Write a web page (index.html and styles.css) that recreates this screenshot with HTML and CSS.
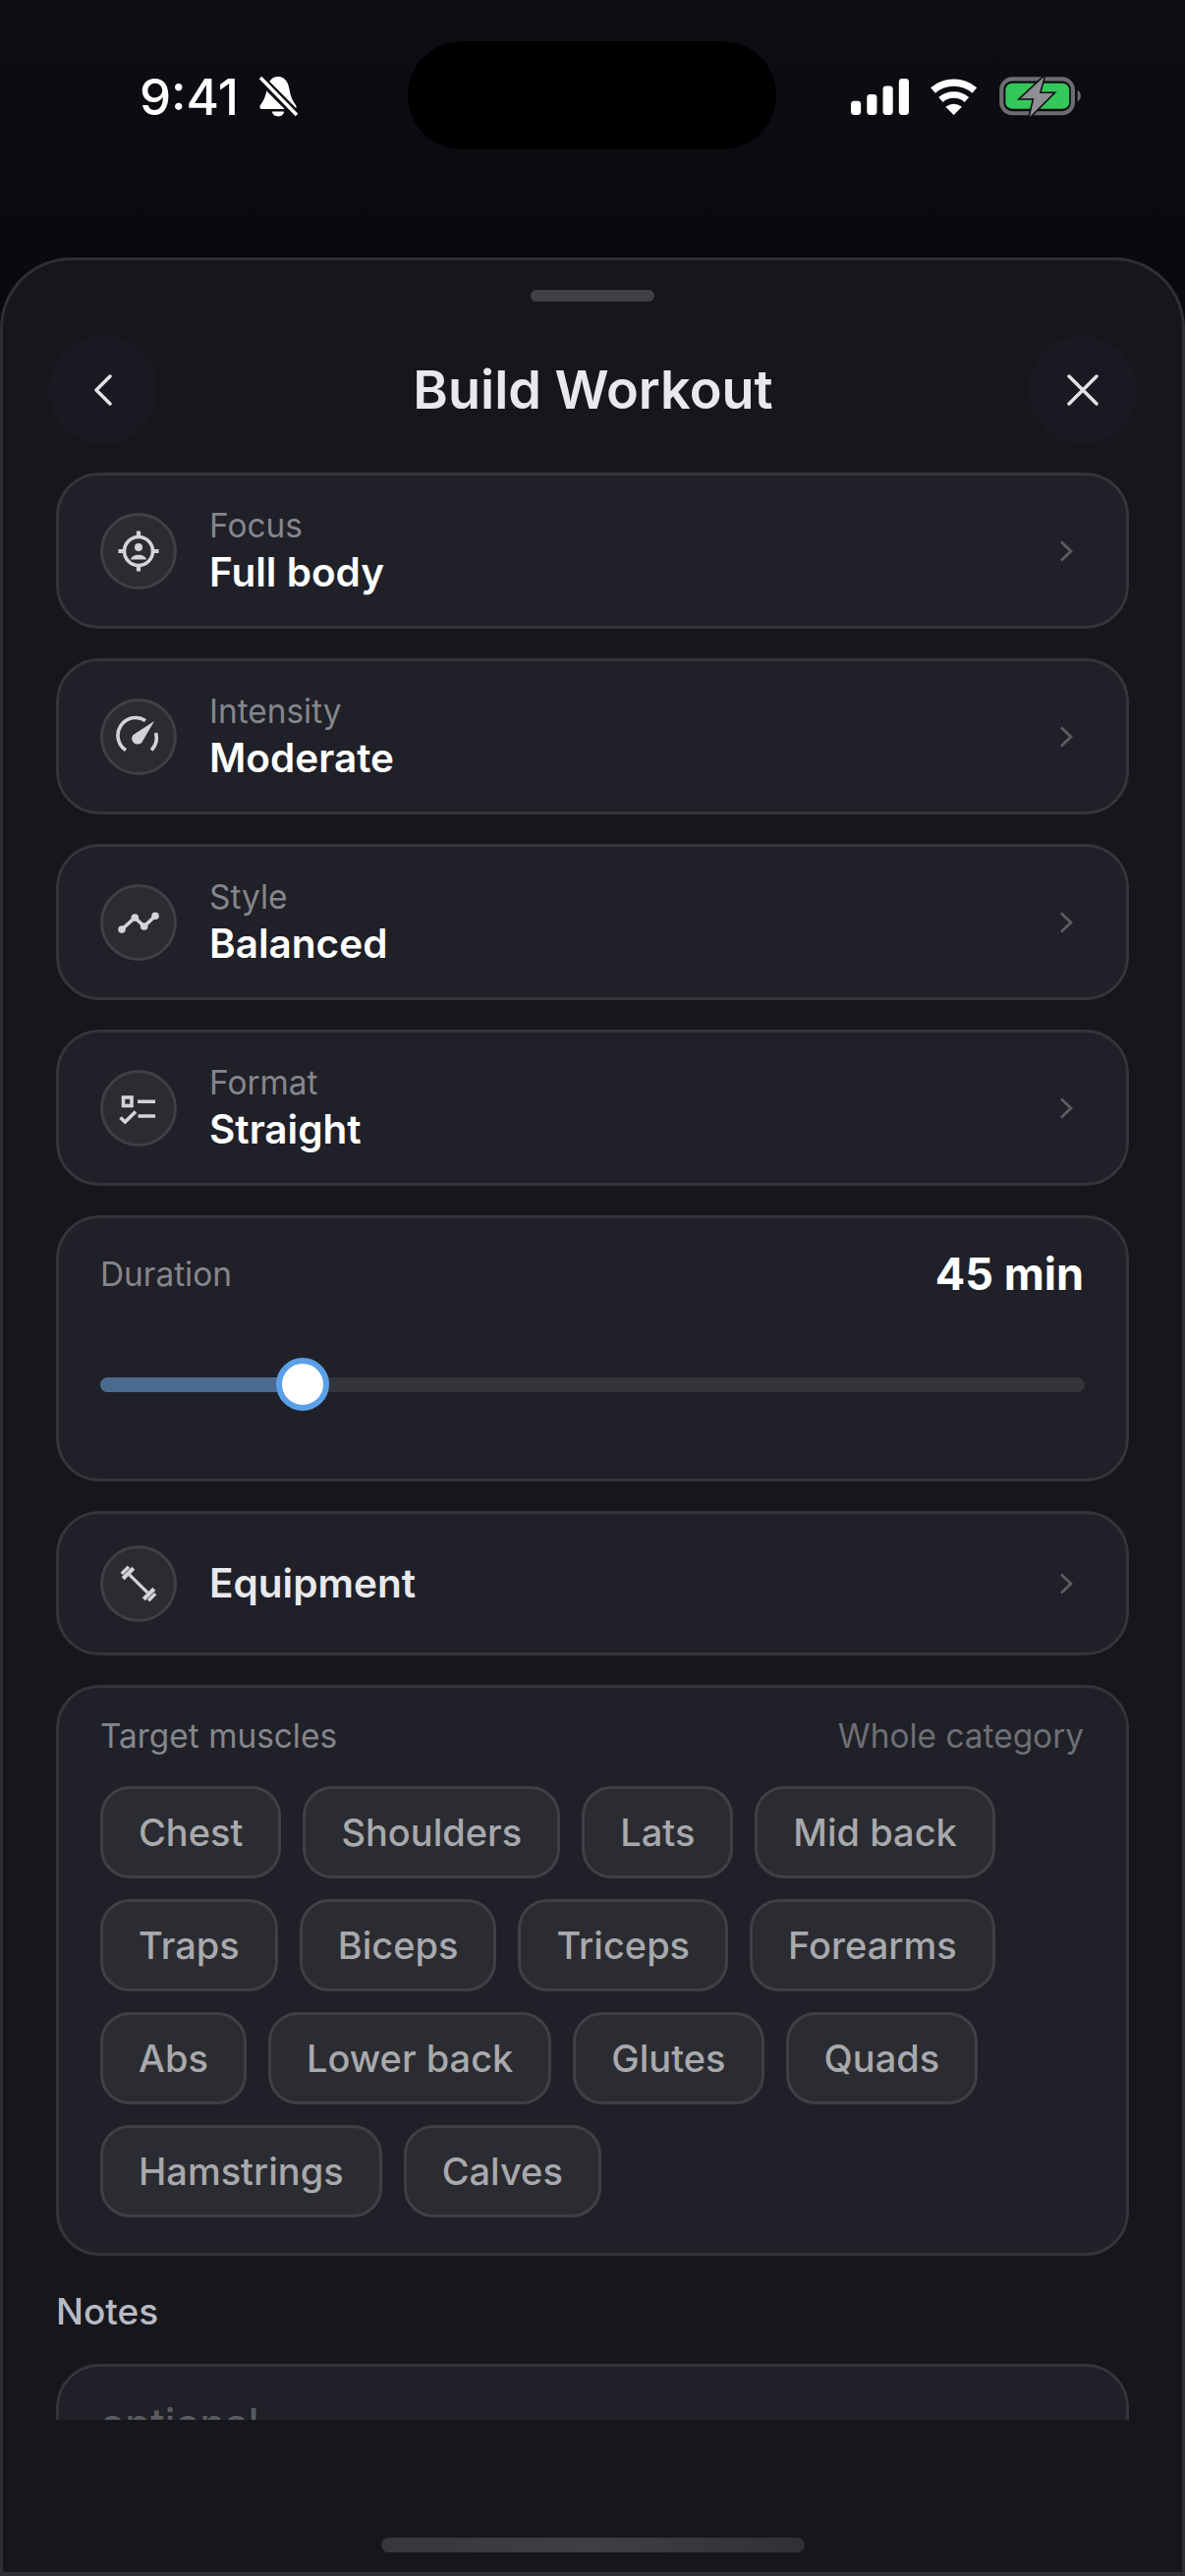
FILE: index.html
```html
<!DOCTYPE html>
<html lang="en">
<head>
<meta charset="utf-8">
<title>Build Workout</title>
<link rel="stylesheet" href="styles.css">
</head>
<body>
<div class="screen">
  <header class="status">
    <div class="status-left">
      <span class="time">9:41</span>
      <svg class="bell" viewBox="0 0 40 43"><path d="M20 1C13 1 9.500 7 8.500 14C7.500 21 5 26 2 30C0.500 32.500 2 34 4 34H36C38 34 39.500 32.500 38 30C35 26 32.500 21 31.500 14C30.500 7 27 1 20 1Z" fill="#fff"/><path d="M14 36.500H26C25.500 43 14.500 43 14 36.500Z" fill="#fff"/><path d="M1 2L39 40" stroke="#0a0b10" stroke-width="9"/><path d="M2 2L39 40" stroke="#fff" stroke-width="3.500"/></svg>
    </div>
    <div class="island"></div>
    <div class="status-right">
      <svg class="signal" viewBox="75 88 174 109"><rect x="75" y="155" width="30" height="42" rx="10" fill="#fff"/><rect x="123" y="135" width="30" height="62" rx="10" fill="#fff"/><rect x="171" y="110" width="30" height="87" rx="10" fill="#fff"/><rect x="219" y="88" width="30" height="109" rx="10" fill="#fff"/></svg>
      <svg class="wifi" viewBox="318 85 150 115"><path d="M328 121A98 98 0 0 1 456 121" fill="none" stroke="#fff" stroke-width="22"/><path d="M352 150A60 60 0 0 1 432 150" fill="none" stroke="#fff" stroke-width="20"/><path d="M392 197L367 172Q392 154 417 172Z" fill="#fff"/></svg>
      <svg class="battery" viewBox="535 82 245 126"><rect x="541" y="92" width="213" height="102" rx="32" fill="none" stroke="#6c6d71" stroke-width="12"/><rect x="553" y="105" width="190" height="76" rx="20" fill="#34c759"/><path d="M768 125C778 130 782 150 768 160Z" fill="#6c6d71"/><path d="M668 85L598 150H638L625 205L695 135H654Z" fill="#8e8f93" stroke="#0a0b10" stroke-width="9" paint-order="stroke"/></svg>
    </div>
  </header>

  <main class="sheet">
    <div class="handle"></div>
    <div class="sheet-head">
      <button class="round-btn" type="button"><svg class="head-icon" viewBox="0 0 32 32"><path d="M23 2L9 16L23 30" /></svg></button>
      <h1 class="title">Build Workout</h1>
      <button class="round-btn" type="button"><svg class="head-icon" viewBox="0 0 32 32"><path d="M2 2L30 30M30 2L2 30" /></svg></button>
    </div>

    <div class="scroll">
      <section class="card row">
        <span class="icon-wrap"><svg class="row-icon" viewBox="-20 -20 40 40"><circle r="14.500" class="ln"/><path class="ln tick" d="M0 -20.500V-14M0 14V20.500M-20.500 0H-14M14 0H20.500"/><circle cy="-4" r="4" class="fl"/><path class="fl" d="M-8 8.500C-7 2 7 2 8 8.500Z"/></svg></span>
        <div class="row-text"><div class="label">Focus</div><div class="value">Full body</div></div>
        <svg class="chev" viewBox="0 0 14 22"><path d="M2 1.500L12 11L2 20.500"/></svg>
      </section>
      <section class="card row">
        <span class="icon-wrap"><svg class="row-icon" viewBox="-20 -20 40 40"><path class="ln" d="M-13 13.500A18 18 0 0 1 7 -16.500"/><path class="ln" d="M17.500 -4A18 18 0 0 1 13 13.500"/><path class="fl" d="M16 -16L3.500 5.500A5.500 5.500 0 1 1 -5.500 -2Z"/></svg></span>
        <div class="row-text"><div class="label">Intensity</div><div class="value">Moderate</div></div>
        <svg class="chev" viewBox="0 0 14 22"><path d="M2 1.500L12 11L2 20.500"/></svg>
      </section>
      <section class="card row">
        <span class="icon-wrap"><svg class="row-icon" viewBox="-20 -20 40 40"><path class="ln" d="M-17 7L-3.700 -5L5.700 4L17 -6.700"/><circle cx="-17" cy="7" r="3.800" class="fl"/><circle cx="-3.700" cy="-5" r="3.800" class="fl"/><circle cx="5.700" cy="4" r="3.800" class="fl"/><circle cx="17" cy="-6.700" r="3.800" class="fl"/></svg></span>
        <div class="row-text"><div class="label">Style</div><div class="value">Balanced</div></div>
        <svg class="chev" viewBox="0 0 14 22"><path d="M2 1.500L12 11L2 20.500"/></svg>
      </section>
      <section class="card row">
        <span class="icon-wrap"><svg class="row-icon" viewBox="-20 -20 40 40"><rect x="-15.500" y="-11" width="8.500" height="8.500" class="ln"/><path class="ln" d="M-1 -6.700H17M-0.500 8H17"/><path class="ln" d="M-18.500 9.500L-13.700 14L-3 3.500"/></svg></span>
        <div class="row-text"><div class="label">Format</div><div class="value">Straight</div></div>
        <svg class="chev" viewBox="0 0 14 22"><path d="M2 1.500L12 11L2 20.500"/></svg>
      </section>

      <section class="card duration">
        <div class="split">
          <span class="label">Duration</span>
          <span class="duration-value">45 min</span>
        </div>
        <div class="track">
          <div class="fill" style="width:20.560%"><span class="thumb"></span></div>
        </div>
      </section>

      <section class="card row row-short">
        <span class="icon-wrap"><svg class="row-icon" viewBox="-20 -20 40 40"><g transform="rotate(45)" class="fl"><rect x="-13" y="-1.600" width="26" height="3.200"/><rect x="-17" y="-7.500" width="4.200" height="15"/><rect x="-21" y="-5" width="3.400" height="10"/><rect x="12.800" y="-7.500" width="4.200" height="15"/><rect x="17.600" y="-5" width="3.400" height="10"/></g></svg></span>
        <div class="row-text"><div class="value value-soft">Equipment</div></div>
        <svg class="chev" viewBox="0 0 14 22"><path d="M2 1.500L12 11L2 20.500"/></svg>
      </section>

      <section class="card muscles">
        <div class="split split-small">
          <span class="label">Target muscles</span>
          <span class="label label-dim">Whole category</span>
        </div>
        <div class="chips">
          <span class="chip">Chest</span>
          <span class="chip">Shoulders</span>
          <span class="chip">Lats</span>
          <span class="chip">Mid back</span>
          <span class="chip">Traps</span>
          <span class="chip">Biceps</span>
          <span class="chip">Triceps</span>
          <span class="chip">Forearms</span>
          <span class="chip">Abs</span>
          <span class="chip">Lower back</span>
          <span class="chip">Glutes</span>
          <span class="chip">Quads</span>
          <span class="chip">Hamstrings</span>
          <span class="chip">Calves</span>
        </div>
      </section>

      <div class="notes-label">Notes</div>
      <section class="card notes"><span class="placeholder">optional</span></section>
    </div>

    <footer class="sheet-foot"><div class="home-bar"></div></footer>
  </main>
</div>
</body>
</html>
```
FILE: styles.css
```css
* { box-sizing: border-box; }

html, body { margin: 0; padding: 0; }

body {
  width: 1206px;
  height: 2622px;
  overflow: hidden;
  background: #0a0b10;
  font-family: "Inter", "Liberation Sans", sans-serif;
}

.screen {
  width: 1206px;
  height: 2622px;
  display: flex;
  flex-direction: column;
  background: linear-gradient(180deg, #0d0e13 0, #090a10 262px);
}

/* status bar */
.status {
  height: 262px;
  flex-shrink: 0;
  padding: 42px 105px 0 142px;
  display: flex;
  align-items: flex-start;
}

.status-left {
  width: 273px;
  height: 110px;
  padding-top: 3px;
  display: flex;
  align-items: center;
  gap: 20px;
}

.time {
  font-size: 51px;
  line-height: 60px;
  font-weight: 500;
  color: #fff;
}

.bell { width: 40px; height: 43px; }

.island {
  width: 375px;
  height: 110px;
  background: #000;
  border-radius: 55px;
}

.status-right {
  flex: 1;
  height: 110px;
  padding-top: 3px;
  display: flex;
  align-items: center;
  justify-content: flex-end;
  gap: 21px;
}

.signal { width: 59px; height: 37px; }
.wifi { width: 50px; height: 38px; }
.battery { width: 84px; height: 43px; }

/* sheet */
.sheet {
  flex: 1;
  min-height: 0;
  display: flex;
  flex-direction: column;
  background: #16171c;
  border: 3px solid #2e2f34;
  border-bottom-width: 4px;
  border-radius: 72px 72px 0 0;
}

.handle {
  width: 126px;
  height: 12px;
  margin: 30px auto 0;
  flex-shrink: 0;
  border-radius: 6px;
  background: #3f4046;
}

.sheet-head {
  flex-shrink: 0;
  margin-top: 35px;
  padding: 0 46px 0 47px;
  display: flex;
  align-items: center;
  justify-content: space-between;
}

.round-btn {
  width: 110px;
  height: 110px;
  padding: 0;
  border: 0;
  border-radius: 50%;
  background: #191a21;
  display: flex;
  align-items: center;
  justify-content: center;
}

.head-icon {
  width: 32px;
  height: 32px;
  fill: none;
  stroke: #e2e3e6;
  stroke-width: 3.500;
  stroke-linecap: round;
  stroke-linejoin: round;
}

.title {
  margin: 0;
  font-size: 54px;
  line-height: 64px;
  font-weight: 600;
  color: #e8e9ec;
}

.scroll {
  flex: 1;
  min-height: 0;
  overflow: hidden;
  margin-top: 29px;
  padding: 0 54px;
  display: flex;
  flex-direction: column;
  gap: 30px;
}

.card {
  flex-shrink: 0;
  background: #1f2028;
  border: 3px solid #33353a;
  border-radius: 44px;
}

.row {
  height: 159px;
  padding: 0 54px 0 42px;
  display: flex;
  align-items: center;
}

.row-short { height: 147px; }

.icon-wrap {
  width: 78px;
  height: 78px;
  flex-shrink: 0;
  border-radius: 50%;
  background: #2b2c31;
  border: 3px solid #3f4045;
  display: flex;
  align-items: center;
  justify-content: center;
}

.row-icon {
  width: 40px;
  height: 40px;
  overflow: visible;
}

.ln {
  fill: none;
  stroke: #d3d4d8;
  stroke-width: 3.600;
}

.tick { stroke-width: 4.200; }

.fl { fill: #d3d4d8; }

.row-text {
  flex: 1;
  margin-left: 33px;
}

.label {
  font-size: 33.400px;
  line-height: 44px;
  font-weight: 400;
  color: #85868b;
}

.label-dim { color: #6e6f74; }

.value {
  font-size: 40.500px;
  line-height: 52px;
  font-weight: 600;
  color: #fff;
}

.value-soft { color: #e8e9ec; }

.chev {
  width: 14px;
  height: 22px;
  flex-shrink: 0;
  fill: none;
  stroke: #5c5d62;
  stroke-width: 2.800;
}

/* duration */
.duration {
  height: 271px;
  padding: 27px 42px 0;
}

.split {
  display: flex;
  align-items: center;
  justify-content: space-between;
  height: 60px;
  padding-right: 1px;
}

.split-small { height: 44px; }

.duration-value {
  font-size: 45px;
  line-height: 60px;
  font-weight: 700;
  color: #fff;
}

.track {
  margin-top: 75px;
  height: 15px;
  border-radius: 8px;
  background: #34353a;
}

.fill {
  position: relative;
  height: 15px;
  border-radius: 8px 0 0 8px;
  background: #4a6b8f;
}

.thumb {
  position: absolute;
  right: -27px;
  top: -20px;
  width: 54px;
  height: 54px;
  border-radius: 50%;
  background: #fff;
  border: 6px solid #5ba0e6;
}

/* muscles */
.muscles {
  padding: 27px 42px 36px;
}

.chips {
  margin-top: 29px;
  display: flex;
  flex-wrap: wrap;
  gap: 21px 22px;
}

.chip {
  height: 94px;
  padding: 0 36px;
  display: flex;
  align-items: center;
  font-size: 38px;
  font-weight: 500;
  color: #a8a9ad;
  background: #2b2c31;
  border: 3px solid #3f4045;
  border-radius: 30px;
}

/* notes */
.notes-label {
  flex-shrink: 0;
  height: 50px;
  font-size: 37px;
  line-height: 54px;
  font-weight: 500;
  color: #b8bac4;
}

.notes {
  height: 200px;
  padding: 33px 42px;
}

.placeholder {
  font-size: 42px;
  line-height: 50px;
  font-weight: 500;
  color: #5a5b60;
}

.sheet-foot {
  flex-shrink: 0;
  height: 155px;
  padding-top: 120px;
}

.home-bar {
  width: 431px;
  height: 15px;
  margin: 0 auto;
  border-radius: 8px;
  background: linear-gradient(90deg, #36373a, #3e3f42 50%, #303134);
}
```
